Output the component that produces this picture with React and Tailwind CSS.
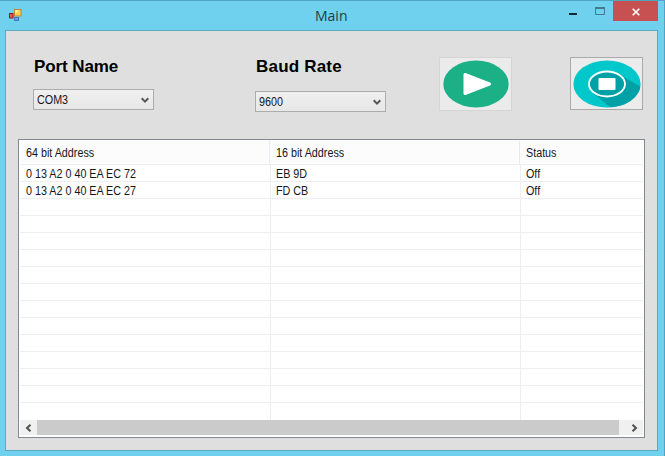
import React from "react";

const devices = [
  { long: "0 13 A2 0 40 EA EC 72", short: "EB 9D", status: "Off" },
  { long: "0 13 A2 0 40 EA EC 27", short: "FD CB", status: "Off" },
];

const rows = Array.from({ length: 15 }, (_, i) => devices[i] || {});

function Label({ children }) {
  return (
    <span className="inline-block origin-left scale-x-[.86] whitespace-pre text-[12.5px] leading-4 text-[#151520]">
      {children}
    </span>
  );
}

function Combo({ value, className }) {
  return (
    <div
      className={`flex h-[21px] items-center justify-between border border-[#acacac] bg-gradient-to-b from-[#f0f0f0] to-[#e7e7e7] pl-[2.5px] pr-1 ${className}`}
    >
      <Label>{value}</Label>
      <svg width="8" height="7" viewBox="0 0 8 7" fill="none" className="mt-px">
        <path d="M.7 1.2 4 4.6 7.3 1.2" stroke="#555" strokeWidth="2" />
      </svg>
    </div>
  );
}

function AppIcon() {
  return (
    <svg width="14" height="13" viewBox="0 0 14 13" className="mt-2">
      <rect x="6.5" y="0.5" width="6.500" height="6.5" fill="#fbd04a" stroke="#b8893a" />
      <path d="M7.2 1.2h4l-4 3.5z" fill="#fff0a5" />
      <rect x="1.5" y="4.5" width="3.5" height="4.5" fill="#e35b50" stroke="#931c20" />
      <rect x="6.5" y="8.5" width="4" height="3" fill="#65a4ea" stroke="#4478b8" />
    </svg>
  );
}

function TitleBar() {
  return (
    <header className="flex h-[29px] pl-2">
      <div className="w-[307px]">
        <AppIcon />
      </div>
      <h1 className="flex-1 pt-[5px] font-['Open_Sans'] text-[14px] leading-5 text-[#173f4c]">Main</h1>
      <div className="mr-1.5 flex w-[104px]">
        <svg width="59" height="20" viewBox="0 0 59 20" fill="none">
          <path d="M15 13h8" stroke="#102a33" strokeWidth="2" />
          <path d="M41.500 6.500h9v7h-9z" stroke="#417b8f" />
          <path d="M41 7h10" stroke="#417b8f" strokeWidth="2" />
        </svg>
        <button className="flex h-5 w-[45px] items-center justify-center bg-[#c75050]">
          <svg width="8" height="8" viewBox="0 0 8 8" className="mt-px">
            <path d="m.7.7 6.6 6.6M7.3.7.7 7.3" stroke="#fff" strokeWidth="1.6" />
          </svg>
        </button>
      </div>
    </header>
  );
}

function PlayIcon() {
  return (
    <svg width="66" height="48" viewBox="0 0 66 48">
      <ellipse cx="33" cy="24" rx="32.7" ry="23.5" fill="#1bb086" />
      <path d="M22 14.500v19l24.500-9.500z" fill="#fff" stroke="#fff" strokeWidth="3" strokeLinejoin="round" />
    </svg>
  );
}

function StopIcon() {
  return (
    <svg width="68" height="48" viewBox="0 0 68 48">
      <defs>
        <clipPath id="stop-disc">
          <ellipse cx="34" cy="24" rx="33.6" ry="23.6" />
        </clipPath>
      </defs>
      <g clipPath="url(#stop-disc)">
        <path d="M0 0h68v48H0z" fill="#00c8ca" />
        <path d="M46 14 68 27v21H38L20 33z" fill="#00a1a6" />
      </g>
      <ellipse cx="34" cy="24" rx="18" ry="12.5" fill="#00a1a6" stroke="#fff" strokeWidth="1.8" />
      <rect x="25.500" y="18" width="17" height="12" rx=".8" fill="#fff" />
    </svg>
  );
}

function Row({ device }) {
  return (
    <div className="flex h-[17px] shrink-0 border-b border-[#eeeeef] last:border-b-0">
      <div className="flex w-[251px] items-center border-r border-[#eeeeef] pl-[6px] pt-[2px]">
        <Label>{device.long}</Label>
      </div>
      <div className="flex w-[250px] items-center border-r border-[#eeeeef] pl-[5px] pt-[2px]">
        <Label>{device.short}</Label>
      </div>
      <div className="flex items-center pl-[5px] pt-[2px]">
        <Label>{device.status}</Label>
      </div>
    </div>
  );
}

function DeviceTable() {
  return (
    <div className="flex h-[299px] w-[627px] flex-col border border-[#828790] bg-white px-px">
      <div className="flex h-[25px] shrink-0 border-b border-[#eeeef2] bg-[#fcfcfd] pt-px">
        <div className="flex w-[250px] items-center border-r border-[#e9e9f2] pl-[6px]">
          <Label>64 bit Address</Label>
        </div>
        <div className="flex w-[250px] items-center border-r border-[#e9e9f2] pl-[6px]">
          <Label>16 bit Address</Label>
        </div>
        <div className="flex items-center pl-[6px]">
          <Label>Status</Label>
        </div>
      </div>
      <div className="flex h-[255px] shrink-0 flex-col overflow-hidden">
        {rows.map((device, i) => (
          <Row key={i} device={device} />
        ))}
      </div>
      <div className="flex h-[15px] shrink-0 bg-[#f0f0f0]">
        <div className="flex w-[17px] items-center justify-center">
          <svg width="7" height="8" viewBox="0 0 7 8" fill="none">
            <path d="M5.5.8 2 4l3.5 3.2" stroke="#505050" strokeWidth="2" />
          </svg>
        </div>
        <div className="w-[582px] bg-[#cbcbcb]" />
        <div className="flex flex-1 items-center justify-end pr-[5px]">
          <svg width="7" height="8" viewBox="0 0 7 8" fill="none">
            <path d="M1.5.8 5 4 1.5 7.2" stroke="#505050" strokeWidth="2" />
          </svg>
        </div>
      </div>
    </div>
  );
}

export default function App() {
  return (
    <div className="h-[456px] w-[665px] overflow-hidden border-r border-t border-[#4fa5c1] bg-[#70d1ee] font-['Liberation_Sans',sans-serif]">
      <TitleBar />
      <main className="ml-[5px] h-[421px] w-[653px] border border-[#5fa9c0] bg-[#dfdfdf] pl-3">
        <div className="flex h-[108px]">
          <div className="ml-[15px] w-[222px] pt-[26px]">
            <h2 className="pl-px text-[17px] font-bold leading-5 tracking-[-0.1px] text-black">Port Name</h2>
            <Combo value="COM3" className="mt-[12px] w-[121px]" />
          </div>
          <div className="w-[184px] pt-[26px]">
            <h2 className="pl-px text-[17px] font-bold leading-5 tracking-[0.2px] text-black">Baud Rate</h2>
            <Combo value="9600" className="mt-[14px] w-[131px]" />
          </div>
          <button className="mt-[26px] flex h-[54px] w-[73px] items-center justify-center border border-[#d5d5d5] bg-[#ebebeb]">
            <PlayIcon />
          </button>
          <button className="ml-[58px] mt-[26px] flex h-[53px] w-[73px] items-center justify-center border border-[#a9a9a9] bg-[#ececec]">
            <StopIcon />
          </button>
        </div>
        <DeviceTable />
      </main>
    </div>
  );
}
